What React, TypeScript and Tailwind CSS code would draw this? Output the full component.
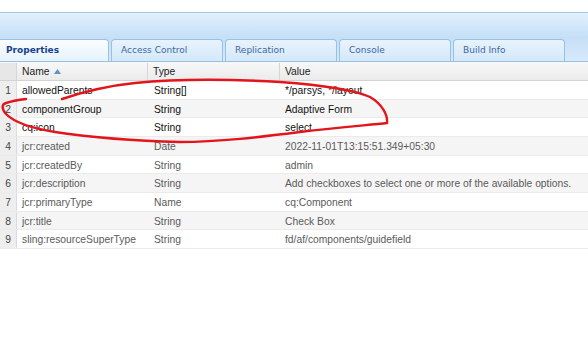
import React from "react"

const tabs = ["Properties", "Access Control", "Replication", "Console", "Build Info"]

const rows = [
    { name: "allowedParents", type: "String[]", value: "*/parsys, */layout", dim: false },
    { name: "componentGroup", type: "String", value: "Adaptive Form", dim: false },
    { name: "cq:icon", type: "String", value: "select", dim: false },
    { name: "jcr:created", type: "Date", value: "2022-11-01T13:15:51.349+05:30", dim: true },
    { name: "jcr:createdBy", type: "String", value: "admin", dim: true },
    { name: "jcr:description", type: "String", value: "Add checkboxes to select one or more of the available options.", dim: true },
    { name: "jcr:primaryType", type: "Name", value: "cq:Component", dim: true },
    { name: "jcr:title", type: "String", value: "Check Box", dim: true },
    { name: "sling:resourceSuperType", type: "String", value: "fd/af/components/guidefield", dim: true },
]

export default function App() {
    return (
        <div className="relative w-[588px] h-[337px] overflow-hidden bg-white">
            {/* top band */}
            <div className="h-[12px]" />
            <div className="h-[26px] border-t border-[#a6cbea] bg-gradient-to-b from-[#e2f0fc] to-[#c4dff6]" />

            {/* tab strip */}
            <div className="flex items-end gap-[2px] h-[24px] bg-gradient-to-b from-[#c6dff5] to-[#d8eafa] border-b border-[#95c1e6] font-['DejaVu_Sans',sans-serif] text-[9px]">
                {tabs.map((t, i) => (
                    <div
                        key={t}
                        className={
                            i === 0
                                ? "w-[109px] h-[22px] flex items-center pl-[6px] pt-[1px] rounded-tr-[4px] border-t border-r border-[#95c1e6] bg-gradient-to-b from-[#fbfdff] to-[#e6f2fc] font-bold text-[#15428b]"
                                : "w-[112px] h-[22px] flex items-center pl-[9px] pt-[1px] rounded-t-[4px] border-t border-x border-[#95c1e6] bg-gradient-to-b from-[#e8f3fd] to-[#d4e8f9] text-[#3d67a0]"
                        }
                    >
                        {t}
                    </div>
                ))}
            </div>

            {/* grid */}
            <div className="font-['Liberation_Sans',Arial,sans-serif] text-[10.3px]">
                <div className="flex h-[19px] pt-[1px] bg-gradient-to-b from-[#f8f8f8] to-[#ebebeb] border-b border-[#d3d3d3] text-[#222]">
                    <div className="w-[17px] bg-[#e7e7e7] border-r border-[#d6d6d6]" />
                    <div className="w-[131px] flex items-center gap-[5px] pl-[5px] border-r border-[#d6d6d6]">
                        <span>Name</span>
                        <svg width="7" height="5" viewBox="0 0 7 5">
                            <path d="M0 5 L3.5 0 L7 5 Z" fill="#5f93cc" />
                        </svg>
                    </div>
                    <div className="w-[132px] flex items-center pl-[5px] border-r border-[#d6d6d6]">Type</div>
                    <div className="flex-1 flex items-center pl-[5px]">Value</div>
                </div>
                {rows.map((r, i) => (
                    <div
                        key={r.name}
                        className={`flex h-[18.66px] pt-[2px] border-b border-[#ebebeb] ${i % 2 === 1 ? "bg-[#f6f5f5]" : "bg-white"} ${r.dim ? "text-[#5a5a5a]" : "text-[#111]"}`}
                    >
                        <div className="w-[17px] -mt-[2px] flex items-center justify-center bg-[#eeeeee] border-r border-[#dcdcdc] text-[#444]">
                            <span className="pt-[2px]">{i + 1}</span>
                        </div>
                        <div className="w-[131px] flex items-center pl-[5px] whitespace-nowrap">{r.name}</div>
                        <div className="w-[132px] flex items-center pl-[6px]">{r.type}</div>
                        <div className="flex-1 flex items-center pl-[5px] whitespace-nowrap">{r.value}</div>
                    </div>
                ))}
            </div>

            {/* hand-drawn annotation */}
            <svg className="absolute left-0 top-0 pointer-events-none" width="588" height="337" viewBox="0 0 588 337">
                <path
                    d="M62 99 C 80 93, 105 86, 135 83 C 175 79, 230 79, 280 82 C 320 85, 352 89, 370 97 C 382 104, 388 115, 387 123 C 370 125, 340 127, 300 132 C 260 137, 220 142, 180 142 C 140 141, 95 138, 55 132 C 30 128, 14 122, 6 114 C 1 108, 2 104, 6 103 C 12 101, 18 100, 26 99"
                    fill="none"
                    stroke="#e3141b"
                    strokeWidth="2.4"
                    strokeLinecap="round"
                    strokeLinejoin="round"
                />
            </svg>
        </div>
    )
}
